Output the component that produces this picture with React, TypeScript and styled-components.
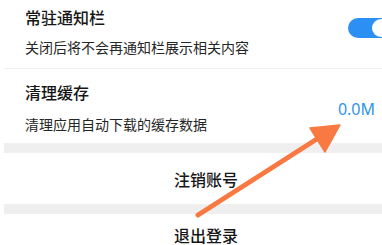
import React from 'react';
import styled, { createGlobalStyle } from 'styled-components';

const GlobalStyle = createGlobalStyle`
  html, body {
    margin: 0;
    padding: 0;
    background: #fff;
    overflow: hidden;
  }
  body {
    font-family: "Noto Sans CJK SC", "Noto Sans", sans-serif;
    color: #222;
  }
`;

const Page = styled.div`
  position: relative;
  width: 382px;
  height: 245px;
  overflow: hidden;
`;

const List = styled.div`
  width: 404px;
  margin-left: 4px;
  display: flex;
  flex-direction: column;
`;

interface RowProps {
  top: number;
  bottom: number;
  divider?: boolean;
}

const SettingRow = styled.div<RowProps>`
  display: flex;
  align-items: center;
  justify-content: space-between;
  padding: ${(p) => `${p.top}px 16px ${p.bottom}px 21px`};
  border-bottom: ${(p) => (p.divider ? '1px solid #efefef' : 'none')};
`;

const TextCol = styled.div`
  display: flex;
  flex-direction: column;
`;

const Title = styled.div`
  font-size: 16px;
  line-height: 22px;
  font-weight: 500;
  color: #161616;
`;

const Desc = styled.div<{ gap: number }>`
  font-size: 14px;
  line-height: 20px;
  color: #262626;
  margin-top: ${(p) => p.gap}px;
`;

const Toggle = styled.div`
  width: 44px;
  height: 20px;
  border-radius: 10px;
  background: #2b8ff3;
  position: relative;
  margin-bottom: 8px;
  &::after {
    content: '';
    position: absolute;
    right: 2px;
    top: 1px;
    width: 18px;
    height: 18px;
    border-radius: 50%;
    background: #fff;
  }
`;

const Value = styled.div`
  font-family: "Noto Sans", sans-serif;
  font-size: 16px;
  line-height: 20px;
  color: #2f95e8;
  margin-right: 17px;
  margin-top: 2px;
`;

const Band = styled.div`
  height: 10px;
  background: #efefef;
`;

const ActionRow = styled.div<{ top: number }>`
  height: 51px;
  box-sizing: border-box;
  padding-top: ${(p) => p.top}px;
  text-align: center;
  font-size: 16px;
  line-height: 20px;
  font-weight: 500;
  color: #161616;
`;

const Arrow = styled.svg`
  position: absolute;
  left: 0;
  top: 0;
  pointer-events: none;
`;

export default function App() {
  return (
    <Page>
      <GlobalStyle />
      <List>
        <SettingRow top={6} bottom={11} divider>
          <TextCol>
            <Title>常驻通知栏</Title>
            <Desc gap={9}>关闭后将不会再通知栏展示相关内容</Desc>
          </TextCol>
          <Toggle />
        </SettingRow>
        <SettingRow top={12} bottom={9}>
          <TextCol>
            <Title>清理缓存</Title>
            <Desc gap={11}>清理应用自动下载的缓存数据</Desc>
          </TextCol>
          <Value>0.0M</Value>
        </SettingRow>
        <Band />
        <ActionRow top={16}>注销账号</ActionRow>
        <Band />
        <ActionRow top={11}>退出登录</ActionRow>
      </List>
      <Arrow width={382} height={245} viewBox="0 0 382 245">
        <line x1={198} y1={215} x2={320} y2={137} stroke="#f87a42" strokeWidth={5} strokeLinecap="round" />
        <polygon points="340,125 310,128 325,152" fill="#f87a42" stroke="#f87a42" strokeWidth={1.5} strokeLinejoin="round" />
      </Arrow>
    </Page>
  );
}
